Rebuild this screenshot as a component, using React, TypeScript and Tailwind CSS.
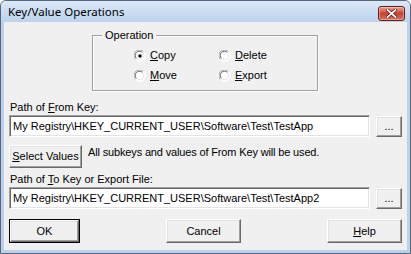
import type { ReactNode } from 'react'

const ui = { fontFamily: '"Liberation Sans", Arial, sans-serif' }

function Key({ children }: { children: ReactNode }) {
  return <span className="underline underline-offset-[1px]">{children}</span>
}

function Radio({ checked, children }: { checked?: boolean; children: ReactNode }) {
  return (
    <div className="flex items-center gap-[4px]">
      <svg width="12" height="12" viewBox="0 0 12 12">
        <circle cx="6" cy="6" r="5.5" fill="#fff" />
        <path d="M1.5 9.5 A5.5 5.5 0 0 1 9.5 1.5" stroke="#a0a0a0" strokeWidth="1" fill="none" />
        <path d="M2.5 8.5 A4.2 4.2 0 0 1 8.5 2.5" stroke="#696969" strokeWidth="1" fill="none" />
        <path d="M9.5 1.5 A5.5 5.5 0 0 1 1.5 9.5" stroke="#fff" strokeWidth="1" fill="none" />
        <path d="M8.5 2.5 A4.2 4.2 0 0 1 2.5 8.5" stroke="#e3e3e3" strokeWidth="1" fill="none" />
        {checked && <circle cx="6" cy="6" r="1.8" fill="#000" />}
      </svg>
      <span className="text-[11px] leading-[13px] text-black">{children}</span>
    </div>
  )
}

function Button({
  children,
  className = '',
  isDefault,
}: {
  children: ReactNode
  className?: string
  isDefault?: boolean
}) {
  return (
    <div className={`${isDefault ? 'border border-black' : ''} ${className}`}>
      <div className="flex h-full w-full items-center justify-center border border-t-[#fff] border-l-[#fff] border-r-[#696969] border-b-[#696969] bg-[#f0f0f0] text-[11px] leading-[13px] text-black shadow-[inset_-1px_-1px_0_#a0a0a0,inset_1px_1px_0_#e3e3e3]">
        {children}
      </div>
    </div>
  )
}

function Edit({ value }: { value: string }) {
  return (
    <div className="flex h-[22px] flex-1 items-center border border-t-[#a0a0a0] border-l-[#a0a0a0] border-r-[#fff] border-b-[#fff] bg-white pl-[3px] text-[11px] leading-[13px] text-black shadow-[inset_1px_1px_0_#696969,inset_-1px_-1px_0_#e3e3e3]">
      {value}
    </div>
  )
}

export default function App() {
  return (
    <div className="h-[254px] w-[411px] bg-white" style={ui}>
      <div className="flex h-full w-full flex-col rounded-t-[6px] border border-[#55677b] bg-[#bcd2ec]">
        <div className="flex h-[21px] shrink-0 items-center justify-between rounded-t-[5px] bg-gradient-to-b from-[#dbe8f7] to-[#bcd2ec] pl-[7px] pr-[5px]">
          <span
            className="pt-[1px] text-[11.5px] leading-[14px] text-black"
            style={{ fontFamily: '"Noto Sans", "Open Sans", sans-serif' }}
          >
            Key/Value Operations
          </span>
          <div className="mt-[3px] flex h-[15px] w-[27px] items-center justify-center rounded-[3px] border border-[#6b1a1a] bg-gradient-to-b from-[#e8a494] via-[#c8402f] to-[#d8735e] shadow-[inset_0_0_0_1px_rgba(255,255,255,0.35)]">
            <svg width="11" height="9" viewBox="0 0 11 9">
              <path d="M1.5 1 L9.5 8 M9.5 1 L1.5 8" stroke="#4a1010" strokeWidth="3.2" strokeLinecap="square" />
              <path d="M1.5 1 L9.5 8 M9.5 1 L1.5 8" stroke="#fff" strokeWidth="1.8" strokeLinecap="square" />
            </svg>
          </div>
        </div>
        <div className="mx-[3px] mb-[3px] flex flex-1 flex-col bg-[#f0f0f0] px-[5px] text-black">
          <div className="mt-[13px] ml-[83px] w-[226px]">
            <div className="relative h-[56px] border border-[#a0a0a0] shadow-[inset_1px_1px_0_#fff,1px_1px_0_#fff]">
              <span className="absolute -top-[8px] left-[9px] bg-[#f0f0f0] px-[3px] text-[11px] leading-[14px]">
                Operation
              </span>
              <div className="grid grid-cols-[85px_auto] gap-y-[7px] pt-[13px] pl-[41px]">
                <Radio checked>
                  <Key>C</Key>opy
                </Radio>
                <Radio>
                  <Key>D</Key>elete
                </Radio>
                <Radio>
                  <Key>M</Key>ove
                </Radio>
                <Radio>
                  <Key>E</Key>xport
                </Radio>
              </div>
            </div>
          </div>

          <div className="mt-[10px] pl-[1px] text-[11px] leading-[13px]">
            Path of <Key>F</Key>rom Key:
          </div>
          <div className="mt-[1px] flex items-center gap-[6px]">
            <Edit value="My Registry\HKEY_CURRENT_USER\Software\Test\TestApp" />
            <Button className="h-[21px] w-[26px] shrink-0">...</Button>
          </div>

          <div className="mt-[8px] flex items-start gap-[6px]">
            <Button className="h-[23px] w-[73px] shrink-0">
              <span>
                <Key>S</Key>elect Values
              </span>
            </Button>
            <span className="mt-[1px] text-[11px] leading-[13px] tracking-[-0.15px]">
              All subkeys and values of From Key will be used.
            </span>
          </div>

          <div className="mt-[5px] pl-[1px] text-[11px] leading-[13px]">
            Path of <Key>T</Key>o Key or Export File:
          </div>
          <div className="mt-[1px] flex items-center gap-[6px]">
            <Edit value="My Registry\HKEY_CURRENT_USER\Software\Test\TestApp2" />
            <Button className="h-[21px] w-[26px] shrink-0">...</Button>
          </div>

          <div className="mt-[10px] flex items-center justify-between">
            <Button isDefault className="h-[24px] w-[71px]">
              OK
            </Button>
            <Button className="h-[24px] w-[75px]">Cancel</Button>
            <Button className="h-[24px] w-[75px]">
              <span>
                <Key>H</Key>elp
              </span>
            </Button>
          </div>
        </div>
      </div>
    </div>
  )
}
